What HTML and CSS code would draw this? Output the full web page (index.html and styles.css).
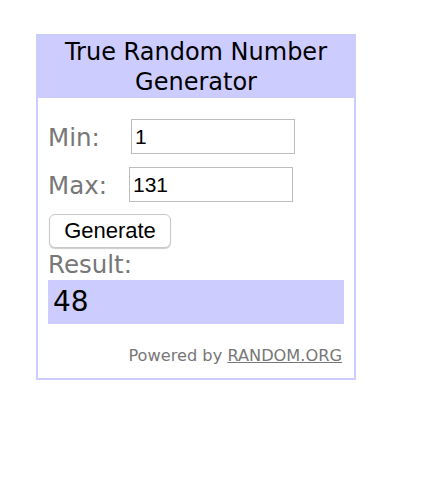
FILE: index.html
```html
<!DOCTYPE html>
<html lang="en">

<head>
    <meta charset="UTF-8">
    <meta name="viewport" content="width=device-width, initial-scale=1.0">
    <title>True Random Number Generator</title>
    <link rel="stylesheet" href="styles.css">
</head>

<body>
    <div class="widget">
        <div class="widget-head">True Random Number<br>Generator</div>
        <div class="widget-body">
            <div class="row">
                <span class="label label-min">Min:</span>
                <input class="field" type="text" value="1">
            </div>
            <div class="row">
                <span class="label label-max">Max:</span>
                <input class="field" type="text" value="131">
            </div>
            <button class="generate" type="button">Generate</button>
            <div class="result-label">Result:</div>
            <div class="result">48</div>
            <div class="powered">Powered by <a href="#">RANDOM.ORG</a></div>
        </div>
    </div>
</body>

</html>
```

FILE: styles.css
```css
html,
body {
    margin: 0;
    background: #fff;
}

body {
    padding: 34px 0 0 36px;
    font-family: "DejaVu Sans", Verdana, sans-serif;
}

.widget {
    box-sizing: border-box;
    width: 320px;
    border: 2px solid #ccccff;
}

.widget-head {
    padding: 1px 0;
    background: #ccccff;
    color: #000;
    font-size: 24px;
    line-height: 30px;
    text-align: center;
}

.widget-body {
    display: flex;
    flex-direction: column;
    align-items: flex-start;
    padding: 21px 10px 12px;
}

.row {
    display: flex;
    align-items: center;
    height: 35px;

    & + .row {
        margin-top: 13px;
    }
}

.label {
    color: #777;
    font-size: 24.5px;
    line-height: 35px;
    padding-top: 2px;
}

.label-min {
    width: 83px;
}

.label-max {
    width: 81px;
}

.field {
    box-sizing: border-box;
    width: 164px;
    height: 35px;
    margin: 0;
    padding: 1px 3px 0;
    border: 1px solid #bdbdbd;
    font-family: "Liberation Sans", Arial, sans-serif;
    font-size: 21px;
    color: #000;
    outline: none;
}

.generate {
    box-sizing: border-box;
    width: 122px;
    height: 34px;
    margin: 12px 0 0 1px;
    padding: 0;
    background: #fff;
    border: 1px solid #c9c9c9;
    border-radius: 6px;
    box-shadow: 0 1px 1px rgba(0, 0, 0, 0.2);
    font-family: "Liberation Sans", Arial, sans-serif;
    font-size: 22px;
    color: #000;
}

.result-label {
    margin-top: 3px;
    color: #777;
    font-size: 24.5px;
    line-height: 28px;
}

.result {
    align-self: stretch;
    margin-top: 1px;
    height: 44px;
    padding-left: 5px;
    background: #ccccff;
    color: #000;
    font-size: 28px;
    line-height: 44px;
}

.powered {
    align-self: stretch;
    margin-top: 22px;
    padding-right: 2px;
    color: #777;
    font-size: 16.2px;
    line-height: 20px;
    text-align: right;

    & a {
        color: #777;
        text-decoration: underline;
    }
}
```
